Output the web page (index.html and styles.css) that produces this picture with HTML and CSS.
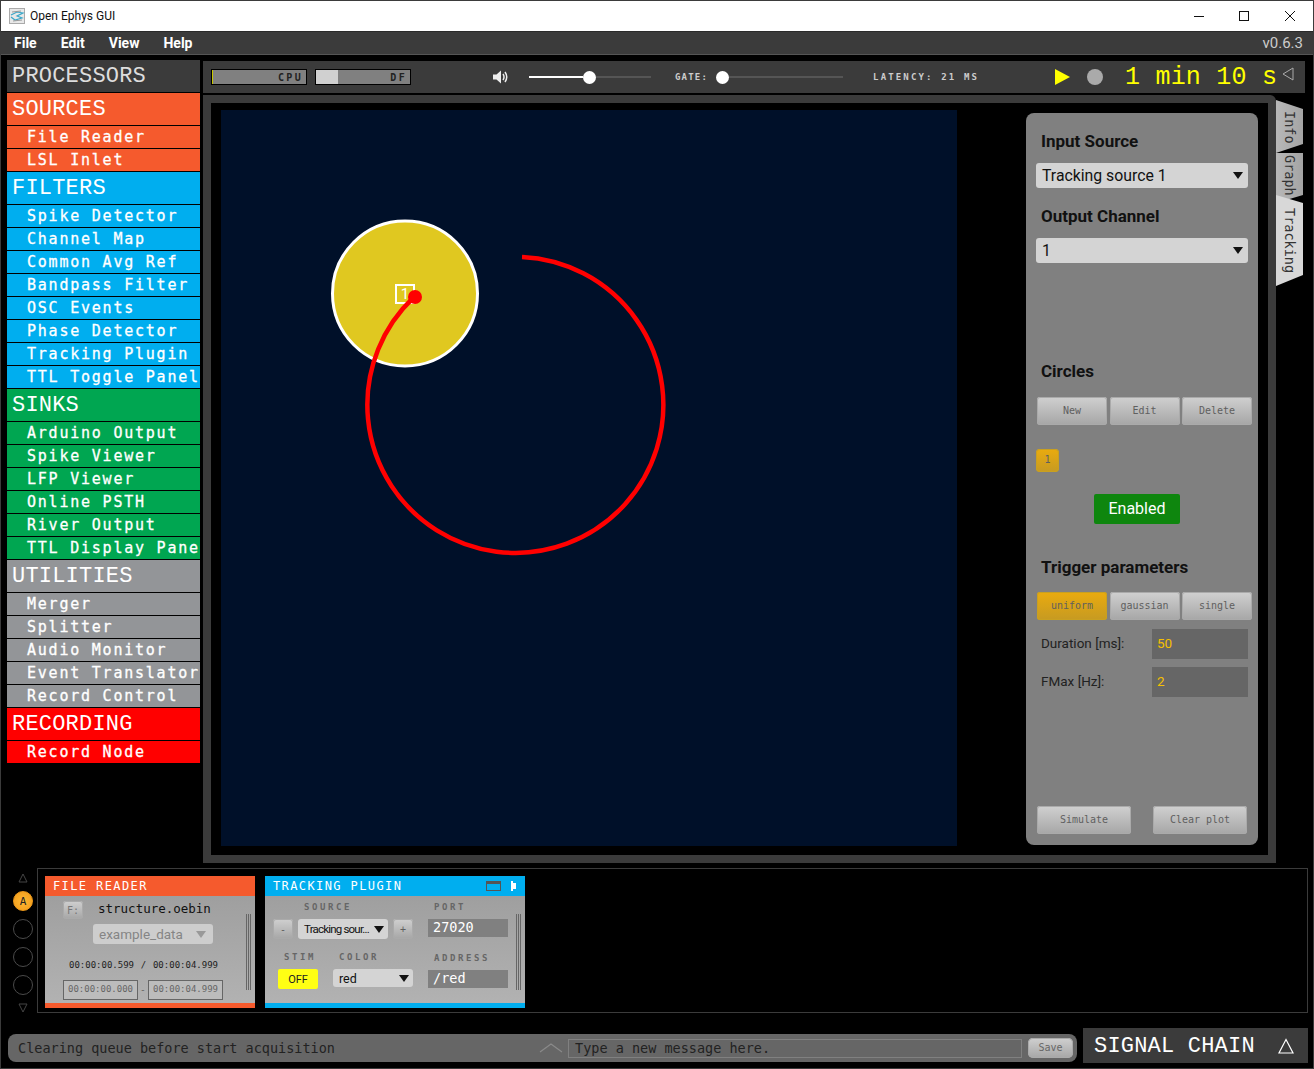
FILE: index.html
```html
<!DOCTYPE html>
<html lang="en">
<head>
  <meta charset="UTF-8">
  <title>Open Ephys GUI</title>
  <link rel="stylesheet" href="styles.css">
</head>
<body>
<div class="window">

  <div class="titlebar">
    <svg class="app-icon" width="16" height="16" viewBox="0 0 16 16">
      <rect x="0.5" y="0.5" width="15" height="15" fill="#e8e8e8" stroke="#aaa"/>
      <path d="M2 7 L8 4 L14 5 L8 8 L13 10 L6 12 L2 9" fill="none" stroke="#3aa7c9" stroke-width="1.2"/>
      <path d="M3 4 L12 3 M4 13 L13 12" stroke="#999" stroke-width="1"/>
    </svg>
    <span class="title-text">Open Ephys GUI</span>
    <div class="win-controls">
      <svg width="12" height="12" viewBox="0 0 12 12"><path d="M1 6.5 H11" stroke="#111" stroke-width="1"/></svg>
      <svg width="12" height="12" viewBox="0 0 12 12"><rect x="1.5" y="1.5" width="9" height="9" fill="none" stroke="#111"/></svg>
      <svg class="win-close" width="12" height="12" viewBox="0 0 12 12"><path d="M1 1 L11 11 M11 1 L1 11" stroke="#111" stroke-width="1"/></svg>
    </div>
  </div>

  <div class="menubar">
    <span class="menu-item">File</span>
    <span class="menu-item">Edit</span>
    <span class="menu-item">View</span>
    <span class="menu-item">Help</span>
    <span class="version">v0.6.3</span>
  </div>

  <div class="main">
    <div class="sidebar">
      <div class="side-head head-main">PROCESSORS</div>

      <div class="side-head sources">SOURCES</div>
      <div class="side-item sources">File Reader</div>
      <div class="side-item sources">LSL Inlet</div>

      <div class="side-head filters">FILTERS</div>
      <div class="side-item filters">Spike Detector</div>
      <div class="side-item filters">Channel Map</div>
      <div class="side-item filters">Common Avg Ref</div>
      <div class="side-item filters">Bandpass Filter</div>
      <div class="side-item filters">OSC Events</div>
      <div class="side-item filters">Phase Detector</div>
      <div class="side-item filters">Tracking Plugin</div>
      <div class="side-item filters">TTL Toggle Panel</div>

      <div class="side-head sinks">SINKS</div>
      <div class="side-item sinks">Arduino Output</div>
      <div class="side-item sinks">Spike Viewer</div>
      <div class="side-item sinks">LFP Viewer</div>
      <div class="side-item sinks">Online PSTH</div>
      <div class="side-item sinks">River Output</div>
      <div class="side-item sinks">TTL Display Panel</div>

      <div class="side-head utilities">UTILITIES</div>
      <div class="side-item utilities">Merger</div>
      <div class="side-item utilities">Splitter</div>
      <div class="side-item utilities">Audio Monitor</div>
      <div class="side-item utilities">Event Translator</div>
      <div class="side-item utilities">Record Control</div>

      <div class="side-head recording">RECORDING</div>
      <div class="side-item recording">Record Node</div>
    </div>

    <div class="work">
      <div class="topbar">
        <div class="meter cpu"><span class="meter-label">CPU</span></div>
        <div class="meter df"><span class="meter-label">DF</span></div>

        <svg class="speaker" width="17" height="16" viewBox="0 0 17 16">
          <path d="M1 5.5 H4.5 L9 1.5 V14.5 L4.5 10.5 H1 Z" fill="#eee"/>
          <path d="M11 5 Q13 8 11 11 M13 3 Q16.5 8 13 13" fill="none" stroke="#eee" stroke-width="1.5"/>
        </svg>
        <div class="slider volume"><div class="track-on"></div><div class="knob"></div><div class="track-off"></div></div>

        <span class="small-label gate-label">GATE:</span>
        <div class="slider gate"><div class="knob"></div><div class="track-off"></div></div>

        <span class="small-label latency">LATENCY: 21 MS</span>

        <svg class="play" width="15" height="16" viewBox="0 0 15 16"><path d="M0 0 L15 8 L0 16 Z" fill="#ffff00"/></svg>
        <div class="rec-dot"></div>
        <span class="clock">1 min 10 s</span>
        <svg class="collapse" width="12" height="14" viewBox="0 0 12 14"><path d="M11 1 V13 L1 7 Z" fill="none" stroke="#aaa" stroke-width="1"/></svg>
      </div>

      <div class="content-row">
        <div class="viewport">
          <div class="canvas">
            <svg width="736" height="736" viewBox="0 0 736 736">
              <circle cx="184" cy="183.5" r="72.5" fill="#e0c820" stroke="#fff" stroke-width="3"/>
              <rect x="175" y="175" width="18" height="18" fill="none" stroke="#fff" stroke-width="2"/>
              <text x="184" y="189" class="circle-num" text-anchor="middle">1</text>
              <path d="M301 147 A148 148 0 1 1 193 187" fill="none" stroke="#ff0000" stroke-width="4.5"/>
              <circle cx="194" cy="187" r="7" fill="#ff0000"/>
            </svg>
          </div>

          <div class="panel">
            <div class="panel-head first">Input Source</div>
            <div class="select big"><span>Tracking source 1</span><i class="arrow"></i></div>
            <div class="panel-head second">Output Channel</div>
            <div class="select big"><span>1</span><i class="arrow"></i></div>

            <div class="panel-head circles">Circles</div>
            <div class="btn-row">
              <div class="btn">New</div>
              <div class="btn">Edit</div>
              <div class="btn">Delete</div>
            </div>
            <div class="btn circle-btn amber">1</div>
            <div class="enabled">Enabled</div>

            <div class="panel-head trigger">Trigger parameters</div>
            <div class="btn-row tight">
              <div class="btn amber">uniform</div>
              <div class="btn">gaussian</div>
              <div class="btn">single</div>
            </div>
            <div class="param first-param"><span class="param-label">Duration [ms]:</span><span class="param-value">50</span></div>
            <div class="param"><span class="param-label">FMax [Hz]:</span><span class="param-value">2</span></div>

            <div class="panel-actions">
              <div class="btn wide">Simulate</div>
              <div class="btn wide">Clear plot</div>
            </div>
          </div>
        </div>

        <div class="tabs">
          <div class="tab tab-info"><span>Info</span></div>
          <div class="tab tab-graph"><span>Graph</span></div>
          <div class="tab tab-tracking"><span>Tracking</span></div>
        </div>
      </div>
    </div>
  </div>

  <div class="chain-row">
    <div class="chain-nav">
      <svg width="10" height="10" viewBox="0 0 10 10"><path d="M5 1 L9 9 H1 Z" fill="none" stroke="#444"/></svg>
      <div class="slot slot-on">A</div>
      <div class="slot"></div>
      <div class="slot"></div>
      <div class="slot"></div>
      <svg width="10" height="10" viewBox="0 0 10 10"><path d="M1 1 H9 L5 9 Z" fill="none" stroke="#444"/></svg>
    </div>

    <div class="chain">
      <div class="editor reader">
        <div class="editor-head sources">FILE READER</div>
        <div class="editor-body">
          <div class="reader-inner">
            <div class="reader-top">
              <div class="btn f-btn">F:</div>
              <span class="file-name">structure.oebin</span>
            </div>
            <div class="select small faded"><span>example_data</span><i class="arrow"></i></div>
            <div class="times"><span>00:00:00.599</span><span>/</span><span>00:00:04.999</span></div>
            <div class="range">
              <span class="range-box">00:00:00.000</span>
              <span class="range-dash">-</span>
              <span class="range-box">00:00:04.999</span>
            </div>
          </div>
          <div class="grip"></div>
        </div>
        <div class="editor-foot sources"></div>
      </div>

      <div class="editor tracker">
        <div class="editor-head filters">
          <span>TRACKING PLUGIN</span>
          <svg class="head-win" width="15" height="10" viewBox="0 0 15 10">
            <rect x="0.5" y="0.5" width="14" height="9" fill="none" stroke="#555"/>
            <rect x="0.5" y="0.5" width="14" height="2.5" fill="#555"/>
          </svg>
          <svg class="head-tab" width="5" height="10" viewBox="0 0 5 10"><path d="M0 0 H2 V2 H5 V8 H2 V10 H0 Z" fill="#fff"/></svg>
        </div>
        <div class="editor-body">
          <div class="tracker-inner">
            <div class="tr-left">
              <span class="tiny-label source-label">SOURCE</span>
              <div class="source-row">
                <div class="btn step">-</div>
                <div class="select small source-select"><span>Tracking sour...</span><i class="arrow"></i></div>
                <div class="btn step">+</div>
              </div>
              <div class="stim-row">
                <div class="stim-col">
                  <span class="tiny-label">STIM</span>
                  <div class="off-btn">OFF</div>
                </div>
                <div class="color-col">
                  <span class="tiny-label">COLOR</span>
                  <div class="select small color-select"><span>red</span><i class="arrow"></i></div>
                </div>
              </div>
            </div>
            <div class="tr-right">
              <span class="tiny-label">PORT</span>
              <div class="value-box port">27020</div>
              <span class="tiny-label address-label">ADDRESS</span>
              <div class="value-box">/red</div>
            </div>
          </div>
          <div class="grip"></div>
        </div>
        <div class="editor-foot filters"></div>
      </div>
    </div>
  </div>

  <div class="footer">
    <div class="message-bar">
      <span class="message">Clearing queue before start acquisition</span>
      <svg class="chevron" width="24" height="10" viewBox="0 0 24 10"><path d="M1 9 L12 1 L23 9" fill="none" stroke="#8a8a8a" stroke-width="1.2"/></svg>
      <div class="message-input">Type a new message here.</div>
      <div class="btn save">Save</div>
    </div>
    <div class="chain-toggle">
      <span>SIGNAL CHAIN</span>
      <svg width="16" height="16" viewBox="0 0 16 16"><path d="M8 1.5 L15 15 H1 Z" fill="none" stroke="#fff" stroke-width="1.2"/></svg>
    </div>
  </div>

</div>
</body>
</html>
```

FILE: styles.css
```css
* {
  box-sizing: border-box;
}

body {
  margin: 0;
  background-color: #000;
  font-family: Roboto, sans-serif;
}

.window {
  width: 1314px;
  height: 1069px;
  border: 1px solid #3b3b3b;
  background-color: #000;
  overflow: hidden;
}

/* title bar */
.titlebar {
  height: 30px;
  background-color: #fff;
  display: flex;
  align-items: center;
  padding-left: 8px;
  font-size: 12px;
  color: #111;
}

.app-icon {
  margin-right: 5px;
}

.win-controls {
  margin-left: auto;
  display: flex;
  gap: 33px;
  padding-right: 17px;
}

.win-close {
  margin-left: 1px;
}

/* menu */
.menubar {
  height: 24px;
  background-color: #3b3b3b;
  border-top: 1px solid #2a2a2a;
  border-bottom: 1px solid #555;
  display: flex;
  align-items: center;
  padding-left: 13px;
  gap: 24px;
  color: #fff;
  font-size: 14px;
  font-weight: bold;
}

.version {
  margin-left: auto;
  padding-right: 10px;
  font-weight: normal;
  color: #ccc;
  font-size: 15px;
}

.main {
  display: flex;
  height: 813px;
}

/* processor list */
.sidebar {
  width: 193px;
  margin: 5px 3px 0 6px;
  display: flex;
  flex-direction: column;
  gap: 1px;
}

.side-head {
  height: 32px;
  padding-left: 5px;
  font-family: 'Liberation Mono', monospace;
  font-size: 22px;
  line-height: 34px;
  letter-spacing: 0.2px;
  color: #fff;
  white-space: nowrap;
  overflow: hidden;
}

.head-main {
  background-color: #3b3b3b;
  color: #ddd;
}

.side-item {
  height: 22px;
  padding-left: 20px;
  font-family: 'DejaVu Sans Mono', monospace;
  font-size: 15px;
  letter-spacing: 1.77px;
  line-height: 22px;
  -webkit-text-stroke: 0.3px #fff;
  color: #fff;
  white-space: nowrap;
  overflow: hidden;
}

.sources { background-color: #f55a2d; }
.filters { background-color: #00aeef; }
.sinks { background-color: #00a651; }
.utilities { background-color: #939598; }
.recording { background-color: #ff0000; }

/* top control bar */
.work {
  width: 1102px;
  padding-top: 6px;
}

.topbar {
  height: 32px;
  background-color: #3b3b3b;
  display: flex;
  align-items: center;
  padding-left: 8px;
  font-family: 'DejaVu Sans Mono', monospace;
}

.meter {
  width: 96px;
  height: 16px;
  border: 1px solid #000;
  background-color: #808080;
  display: flex;
  justify-content: flex-end;
  align-items: center;
  padding-right: 3px;
}

.meter.cpu {
  box-shadow: inset 1px 0 0 #c8c800;
}

.meter.df {
  margin-left: 8px;
  background: linear-gradient(to right, #d0d0d0 22px, #808080 22px);
}

.meter-label {
  font-size: 10px;
  font-weight: bold;
  letter-spacing: 2.3px;
  color: #222;
}

.speaker {
  margin-left: 81px;
}

.slider {
  display: flex;
  align-items: center;
  height: 14px;
}

.volume {
  margin-left: 20px;
  width: 122px;
}

.gate {
  margin-left: 8px;
  width: 127px;
}

.track-on {
  width: 54px;
  height: 2px;
  background-color: #fff;
}

.track-off {
  flex: 1;
  height: 2px;
  background-color: #555;
}

.knob {
  width: 13px;
  height: 13px;
  border-radius: 50%;
  background-color: #fff;
}

.small-label {
  font-size: 9px;
  font-weight: bold;
  letter-spacing: 2.15px;
  color: #ccc;
}

.gate-label {
  margin-left: 24px;
  letter-spacing: 1.2px;
}

.latency {
  margin-left: 30px;
}

.play {
  margin-left: 76px;
}

.rec-dot {
  width: 16px;
  height: 16px;
  margin-left: 17px;
  border-radius: 50%;
  background-color: #aaa;
}

.clock {
  margin-left: 22px;
  font-family: 'Liberation Mono', monospace;
  font-size: 25px;
  letter-spacing: 0.2px;
  color: #ffff00;
  white-space: nowrap;
}

.collapse {
  margin-left: 5px;
  margin-top: -6px;
}

/* main view */
.content-row {
  display: flex;
  margin-top: 2px;
}

.viewport {
  width: 1073px;
  height: 768px;
  border: 8px solid #3b3b3b;
  border-top-right-radius: 6px;
  background-color: #000;
  display: flex;
  padding: 7px 10px 9px 10px;
}

.canvas {
  width: 736px;
  height: 736px;
  background-color: #001029;
  flex-shrink: 0;
}

.canvas svg {
  display: block;
}

.circle-num {
  font-family: Roboto, sans-serif;
  font-size: 15px;
  fill: #fff;
}

.panel {
  width: 232px;
  height: 732px;
  margin: 3px 0 0 69px;
  background-color: #808080;
  border-radius: 8px;
  padding: 0 10px 11px 10px;
  display: flex;
  flex-direction: column;
  align-items: flex-start;
  color: #111;
}

.panel-head {
  height: 20px;
  line-height: 22px;
  padding-left: 5px;
  font-size: 17px;
  font-weight: bold;
}

.panel-head.first { margin-top: 17px; }
.panel-head.second { margin-top: 17px; }
.panel-head.circles { margin-top: 97px; }
.panel-head.trigger { margin-top: 32px; }

.select {
  display: flex;
  align-items: center;
  justify-content: space-between;
  background-color: #d4d4d4;
  border-radius: 3px;
  color: #111;
}

.select.big {
  width: 212px;
  height: 25px;
  margin-top: 13px;
  padding: 0 5px 0 6px;
  font-size: 15.8px;
}

.arrow {
  width: 0;
  height: 0;
  border-left: 5.5px solid transparent;
  border-right: 5.5px solid transparent;
  border-top: 7px solid #111;
}

.btn-row {
  display: flex;
  gap: 2.5px;
  margin: 17px 0 0 1px;
}

.btn-row.tight {
  margin-top: 16px;
}

.btn {
  width: 70px;
  height: 28px;
  padding-bottom: 2px;
  border-radius: 3px;
  background: linear-gradient(to bottom, #d0d0d0, #a6a6a6);
  box-shadow: inset 0 0 0 1px #aaa;
  font-family: 'DejaVu Sans Mono', monospace;
  font-size: 10px;
  color: #5f5f5f;
  display: flex;
  align-items: center;
  justify-content: center;
}

.amber {
  background: linear-gradient(to bottom, #eaab0e, #c69a22);
  box-shadow: inset 0 0 0 1px #c9a020;
}

.circle-btn {
  width: 23px;
  height: 23px;
  margin-top: 24px;
  border-radius: 4px;
}

.enabled {
  width: 86px;
  height: 30px;
  margin: 22px 0 0 58px;
  padding-bottom: 2px;
  background-color: #0e860e;
  border-radius: 2px;
  color: #fff;
  font-size: 16px;
  display: flex;
  align-items: center;
  justify-content: center;
}

.param {
  width: 212px;
  height: 30px;
  display: flex;
  align-items: center;
  padding-left: 5px;
  margin-top: 8px;
  font-size: 13.5px;
  color: #222;
}

.first-param {
  margin-top: 9px;
}

.param-label {
  width: 111px;
  padding-bottom: 2px;
}

.param-value {
  width: 96px;
  height: 30px;
  line-height: 29px;
  padding-left: 5px;
  background-color: #666;
  color: #f5c000;
}

.panel-actions {
  margin-top: auto;
  width: 100%;
  display: flex;
  justify-content: space-between;
  padding: 0 1px;
}

.btn.wide {
  width: 94px;
}

/* side tabs */
.tabs {
  width: 27px;
  height: 190px;
  margin-top: 5px;
  display: flex;
  flex-direction: column;
  font-family: 'DejaVu Sans Mono', monospace;
  font-size: 13.5px;
  color: #333;
}

.tab {
  width: 27px;
  display: flex;
  align-items: center;
  writing-mode: vertical-rl;
}

.tab-info {
  height: 53px;
  padding-top: 11px;
  background: linear-gradient(to right, #b8b8b8, #a4a4a4);
  clip-path: polygon(0 0, 100% 9px, 100% 44px, 0 100%);
}

.tab-graph {
  height: 50px;
  padding-top: 2px;
  background: linear-gradient(to right, #b8b8b8, #a4a4a4);
  clip-path: polygon(0 0, 100% 0, 100% 42px, 0 100%);
}

.tab-tracking {
  height: 91px;
  margin-top: -8px;
  padding-top: 13px;
  background-color: #d8d8d8;
  clip-path: polygon(0 0, 100% 8px, 100% 80px, 0 100%);
}

/* signal chain */
.chain-row {
  height: 145px;
  display: flex;
}

.chain-nav {
  width: 36px;
  padding: 5px 0 0 8px;
  display: flex;
  flex-direction: column;
  align-items: center;
  gap: 8px;
}

.slot {
  width: 20px;
  height: 20px;
  flex-shrink: 0;
  border: 1px solid #4a4a4a;
  border-radius: 50%;
  font-family: 'DejaVu Sans Mono', monospace;
  font-size: 11px;
  color: #222;
  display: flex;
  align-items: center;
  justify-content: center;
}

.slot-on {
  background: radial-gradient(circle, #ffb833, #f09a1a);
  border-color: #f09a1a;
}

.chain {
  width: 1271px;
  height: 145px;
  border: 1px solid #3b3b3b;
  padding: 7px;
  display: flex;
  gap: 10px;
}

.editor {
  height: 132px;
  display: flex;
  flex-direction: column;
}

.reader { width: 210px; }
.tracker { width: 260px; }

.editor-head {
  height: 20px;
  padding-left: 8px;
  font-family: 'DejaVu Sans Mono', monospace;
  font-size: 12px;
  letter-spacing: 1.4px;
  color: #fff;
  display: flex;
  align-items: center;
}

.head-win {
  margin-left: auto;
}

.head-tab {
  margin: 0 9px 0 10px;
}

.editor-body {
  flex: 1;
  display: flex;
  background: linear-gradient(to bottom, #9f9f9f, #b2b2b2);
}

.editor-foot {
  height: 5px;
}

.grip {
  width: 5px;
  height: 76px;
  margin: 18px 4px 0 auto;
  flex-shrink: 0;
  background: repeating-linear-gradient(to right, #666 0, #666 1px, transparent 1px, transparent 2px);
}

.reader-inner {
  width: 190px;
  padding: 5px 0 0 18px;
}

.reader-top {
  display: flex;
  align-items: center;
}

.btn.f-btn {
  width: 20px;
  height: 18px;
  padding-bottom: 0;
  font-size: 10px;
  color: #777;
}

.file-name {
  margin-left: 15px;
  margin-top: -3px;
  font-family: 'DejaVu Sans Mono', monospace;
  font-size: 12.5px;
  color: #111;
}

.select.small {
  height: 20px;
  font-size: 12.5px;
}

.select.faded {
  width: 120px;
  height: 20px;
  margin: 5px 0 0 30px;
  padding: 0 7px 0 6px;
  background-color: #cdcdcd;
  color: #858585;
  font-size: 13.5px;
}

.faded .arrow {
  border-top-color: #999;
}

.times {
  display: flex;
  justify-content: space-between;
  width: 149px;
  margin: 16px 0 0 6px;
  font-family: 'DejaVu Sans Mono', monospace;
  font-size: 9px;
  color: #222;
}

.range {
  display: flex;
  align-items: center;
  margin-top: 10px;
}

.range-box {
  width: 75px;
  height: 20px;
  line-height: 17px;
  text-align: center;
  border: 1.5px solid #666;
  background-color: #bcbcbc;
  font-family: 'DejaVu Sans Mono', monospace;
  font-size: 9px;
  color: #666;
}

.range-dash {
  width: 10px;
  text-align: center;
  font-size: 10px;
  color: #666;
}

.tracker-inner {
  display: flex;
  width: 243px;
  padding-left: 8px;
}

.tiny-label {
  display: block;
  font-family: 'DejaVu Sans Mono', monospace;
  font-size: 9px;
  font-weight: bold;
  line-height: 11px;
  letter-spacing: 2.6px;
  color: #666;
}

.tr-left {
  width: 155px;
  padding-top: 6px;
}

.source-label {
  margin-left: 31px;
}

.source-row {
  display: flex;
  gap: 5px;
  margin-top: 6px;
}

.btn.step {
  width: 20px;
  height: 20px;
  padding-bottom: 0;
  font-size: 10px;
}

.select.source-select {
  width: 90px;
  padding: 0 4px 0 6px;
  letter-spacing: -0.8px;
  font-size: 11.5px;
  white-space: nowrap;
}

.source-select .arrow,
.color-select .arrow {
  border-left-width: 5px;
  border-right-width: 5px;
}

.stim-row {
  display: flex;
  margin: 13px 0 0 5px;
}

.stim-col {
  width: 55px;
}

.stim-col .tiny-label {
  margin-left: 6px;
}

.off-btn {
  width: 40px;
  height: 20px;
  margin-top: 6px;
  border-radius: 2px;
  background-color: #ffff14;
  font-size: 11px;
  color: #222;
  display: flex;
  align-items: center;
  justify-content: center;
}

.color-col .tiny-label {
  margin-left: 6px;
}

.select.color-select {
  width: 80px;
  height: 18px;
  margin-top: 6px;
  padding: 0 4px 0 6px;
}

.tr-right {
  width: 80px;
  padding-top: 6px;
}

.tr-right .tiny-label {
  margin-left: 6px;
}

.value-box {
  width: 80px;
  height: 18px;
  margin-top: 6px;
  padding-left: 5px;
  line-height: 16px;
  background-color: #808080;
  font-family: 'DejaVu Sans Mono', monospace;
  font-size: 13.5px;
  color: #fff;
}

.address-label {
  margin-top: 16px;
}

/* bottom bar */
.footer {
  height: 50px;
  display: flex;
  padding: 15px 5px 0 7px;
  align-items: flex-start;
}

.message-bar {
  width: 1069px;
  height: 28px;
  margin-top: 6px;
  border-radius: 8px;
  background-color: #666;
  display: flex;
  align-items: center;
  padding-left: 10px;
  font-family: 'DejaVu Sans Mono', monospace;
  font-size: 13.5px;
  color: #222;
}

.message {
  width: 521px;
  white-space: nowrap;
}

.chevron {
  flex-shrink: 0;
}

.message-input {
  width: 454px;
  height: 19px;
  margin-left: 5px;
  padding-left: 6px;
  line-height: 17px;
  border: 1px solid #808080;
  white-space: nowrap;
}

.btn.save {
  width: 45px;
  height: 20px;
  margin-left: 6px;
  border-radius: 5px;
  color: #666;
}

.chain-toggle {
  width: 225px;
  height: 35px;
  margin-left: 6px;
  padding: 1px 14px 0 11px;
  background-color: #3b3b3b;
  display: flex;
  align-items: center;
  justify-content: space-between;
  font-family: 'Liberation Mono', monospace;
  font-size: 22px;
  letter-spacing: 0.2px;
  color: #fff;
}
```
